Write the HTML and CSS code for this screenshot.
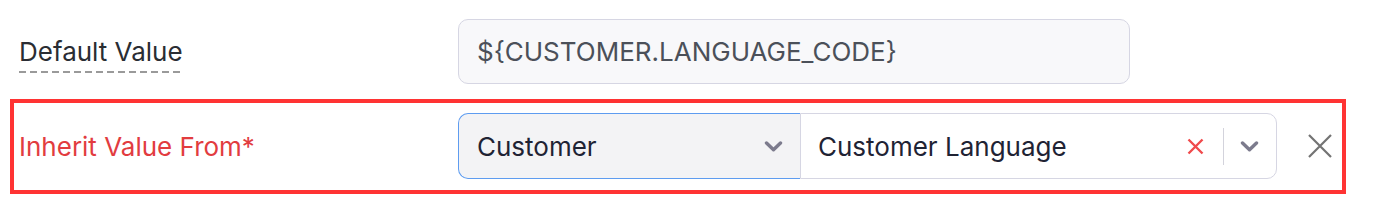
FILE: index.html
```html
<!DOCTYPE html>
<html lang="en">
<head>
    <meta charset="UTF-8">
    <meta name="viewport" content="width=device-width, initial-scale=1.0">
    <title>Field Settings</title>
    <link rel="stylesheet" href="styles.css">
</head>
<body>
    <div class="form">
        <div class="field">
            <div class="field-label">
                <span class="hint-label">Default Value</span>
            </div>
            <div class="text-input">${CUSTOMER.LANGUAGE_CODE}</div>
        </div>

        <div class="field field-inherit">
            <div class="field-label required">Inherit Value From*</div>
            <div class="combo">
                <div class="select select-source">
                    <span class="select-value">Customer</span>
                    <svg class="chevron" width="19" height="11" viewBox="0 0 19 11">
                        <path d="M2.5 2 L9.5 8.8 L16.5 2" />
                    </svg>
                </div>
                <div class="select select-attribute">
                    <span class="select-value">Customer Language</span>
                    <svg class="clear" width="17" height="17" viewBox="0 0 17 17">
                        <path d="M1.5 1.5 L15.5 15.5 M15.5 1.5 L1.5 15.5" />
                    </svg>
                    <span class="divider"></span>
                    <svg class="chevron" width="19" height="11" viewBox="0 0 19 11">
                        <path d="M2.5 2 L9.5 8.8 L16.5 2" />
                    </svg>
                </div>
            </div>
            <button class="remove" type="button" aria-label="Remove">
                <svg width="24" height="24" viewBox="0 0 24 24">
                    <path d="M1 1 L23 23 M23 1 L1 23" />
                </svg>
            </button>
        </div>
    </div>
</body>
</html>
```

FILE: styles.css
```css
:root {
    --text: #2a2d33;
    --muted: #4b5059;
    --navy: #1f2334;
    --border: #d6d6e3;
    --blue: #5e9cf0;
    --danger: #ff3333;
    --label-red: #e23c3f;
}

* {
    margin: 0;
    padding: 0;
    box-sizing: border-box;
}

body {
    background: #fff;
    font-family: 'Inter', 'Noto Sans', sans-serif;
    font-size: 26px;
    color: var(--text);
}

.form {
    padding-top: 19px;
}

.field {
    display: flex;
    align-items: center;
    padding-left: 19px;
}

.field-label {
    width: 439px;
    flex-shrink: 0;
}

.hint-label {
    display: inline-block;
    line-height: 30px;
    padding: 6px 0;
    vertical-align: top;
    background: repeating-linear-gradient(to right, #9a9a9a 0 7px, transparent 7px 11px) left bottom / 100% 2px no-repeat;
}

.text-input {
    width: 672px;
    height: 65px;
    display: flex;
    align-items: center;
    padding-left: 18px;
    background: #f8f8fa;
    border: 1.5px solid var(--border);
    border-radius: 10px;
    color: var(--muted);
}

.field-inherit {
    width: 1336px;
    margin: 15px 0 0 10px;
    padding: 10px 0 11px 5px;
    border: 4px solid var(--danger);
}

.required {
    color: var(--label-red);
}

.combo {
    display: flex;
    width: 819px;
    height: 66px;
}

.select {
    display: flex;
    align-items: center;
    height: 100%;
    color: var(--navy);
}

.select-value {
    flex: 1;
}

.select-source {
    width: 342px;
    padding: 0 17px 0 18px;
    background: #f3f3f5;
    border: 1.5px solid var(--blue);
    border-right: none;
    border-radius: 10px 0 0 10px;
}

.select-attribute {
    flex: 1;
    padding: 0 17px 0 17px;
    border: 1.5px solid var(--border);
    border-radius: 0 10px 10px 0;
}

.chevron path {
    fill: none;
    stroke: #7c7b8d;
    stroke-width: 3.4;
    stroke-linecap: round;
    stroke-linejoin: round;
}

.clear path {
    fill: none;
    stroke: #f04a4c;
    stroke-width: 2.4;
}

.divider {
    width: 1.5px;
    height: 37px;
    margin: 0 16px 0 19px;
    background: #d3d3dc;
}

.remove {
    margin-left: 31px;
    width: 24px;
    height: 24px;
    border: none;
    background: none;
    cursor: pointer;
}

.remove svg {
    display: block;
}

.remove path {
    fill: none;
    stroke: #737373;
    stroke-width: 2.2;
}
```
